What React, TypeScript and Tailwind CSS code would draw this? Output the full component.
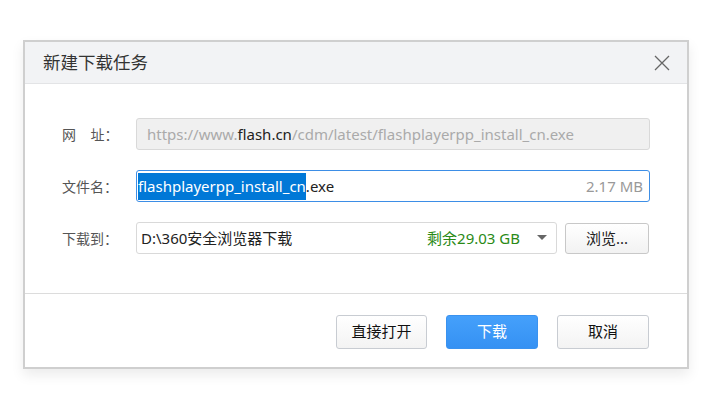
export default function App() {
  const font = { fontFamily: '"Noto Sans", "Noto Sans CJK SC", sans-serif' };

  return (
    <div className="w-[705px] h-[401px] bg-white pt-[40px] pl-[23px]" style={font}>
      <div className="w-[666px] h-[329px] border-2 border-[#cfcfcf] bg-white shadow-[0_6px_12px_rgba(0,0,0,0.08)] flex flex-col">
        {/* header */}
        <div className="h-[42px] bg-[#f2f3f5] border-b border-[#e3e4e6] flex items-center justify-between pl-[18px] pr-[16px] shrink-0">
          <span className="text-[17.5px] text-[#333]">新建下载任务</span>
          <svg width="18" height="18" viewBox="0 0 18 18" className="text-[#666]">
            <path d="M2 2 L16 16 M16 2 L2 16" stroke="currentColor" strokeWidth="1.3" fill="none" />
          </svg>
        </div>

        {/* body */}
        <div className="flex flex-col gap-[20px] pt-[34px] pl-[37px] pr-[37px] h-[210px] border-b border-[#dcdcdc] shrink-0">
          <div className="flex items-center h-[32px]">
            <div className="w-[74px] text-[14px] text-[#555]">网&nbsp;&nbsp;&nbsp;&nbsp;址：</div>
            <div className="flex-1 h-[32px] border border-[#d9d9d9] rounded-[3px] bg-[#f0f0f0] flex items-center pl-[10px] text-[15px] text-[#aaa]">
              https://www.<span className="text-[#222]">flash.cn</span>/cdm/latest/flashplayerpp_install_cn.exe
            </div>
          </div>

          <div className="flex items-center h-[32px]">
            <div className="w-[74px] text-[14px] text-[#555]">文件名：</div>
            <div className="flex-1 h-[32px] border border-[#3d8ee6] rounded-[3px] bg-white flex items-center pl-[1px] pr-[6px] text-[15px]">
              <span className="bg-[#0078d7] text-white leading-[27px]">flashplayerpp_install_cn</span>
              <span className="text-[#222]">.exe</span>
              <span className="ml-auto text-[#999]">2.17 MB</span>
            </div>
          </div>

          <div className="flex items-center h-[32px] gap-[8px]">
            <div className="w-[66px] text-[14px] text-[#555]">下载到：</div>
            <div className="w-[421px] h-[32px] border border-[#d9d9d9] rounded-[3px] bg-white flex items-center pl-[4px] pr-[8px] text-[15px]">
              <span className="text-[#222]">D:\360安全浏览器下载</span>
              <span className="ml-auto text-[#2a8a16]">剩余29.03 GB</span>
              <svg width="12" height="8" viewBox="0 0 12 8" className="ml-[16px]">
                <path d="M1 1 L11 1 L6 6 Z" fill="#666" />
              </svg>
            </div>
            <button className="w-[84px] h-[31px] border border-[#c8c8c8] rounded-[3px] bg-gradient-to-b from-white to-[#f2f2f2] text-[15px] text-[#222]">
              浏览...
            </button>
          </div>
        </div>

        {/* footer */}
        <div className="flex-1 flex items-center justify-end gap-[19px] pr-[38px] pt-[2px]">
          <button className="w-[91px] h-[34px] border border-[#c8ccd2] rounded-[3px] bg-gradient-to-b from-white to-[#f3f3f3] text-[15px] text-[#111]">
            直接打开
          </button>
          <button className="w-[92px] h-[34px] rounded-[3px] bg-gradient-to-b from-[#45a0fb] to-[#3591f3] border border-[#3a92ef] text-[15px] text-white">
            下载
          </button>
          <button className="w-[92px] h-[34px] border border-[#c8ccd2] rounded-[3px] bg-gradient-to-b from-white to-[#f3f3f3] text-[15px] text-[#111]">
            取消
          </button>
        </div>
      </div>
    </div>
  );
}
